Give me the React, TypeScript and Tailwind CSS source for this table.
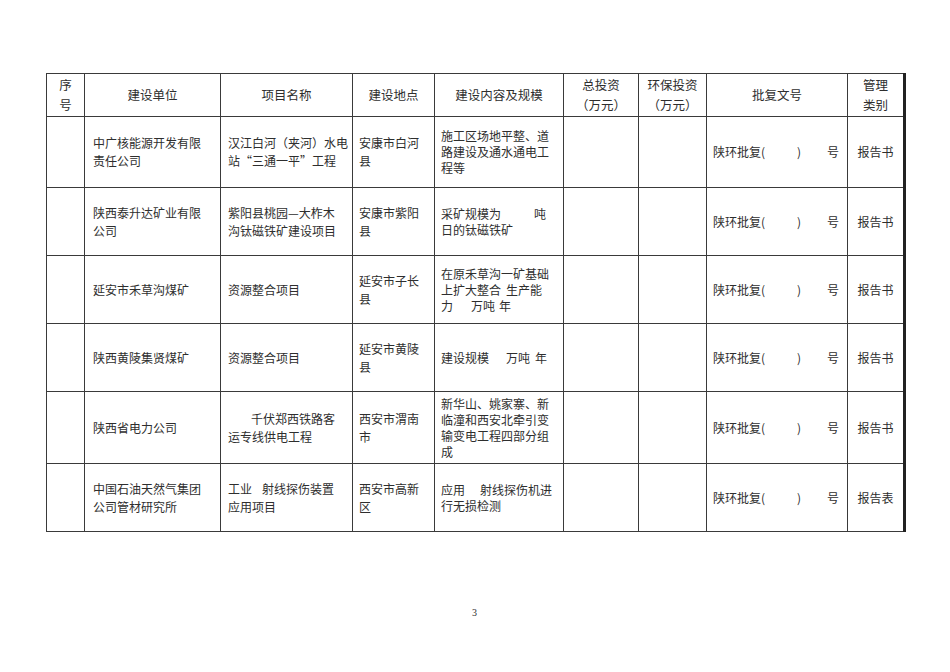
import React from "react";

const cell = "border border-[#3a3a3a] align-middle";

type Row = {
  unit: React.ReactNode;
  project: React.ReactNode;
  place: React.ReactNode;
  scope: React.ReactNode;
  kind: string;
  h: string;
};

const rows: Row[] = [
  {
    unit: <>中广核能源开发有限<br />责任公司</>,
    project: <>汉江白河（夹河）水电<br />站“三通一平”工程</>,
    place: <>安康市白河<br />县</>,
    scope: <>施工区场地平整、道<br />路建设及通水通电工<br />程等</>,
    kind: "报告书",
    h: "h-[71px]",
  },
  {
    unit: <>陕西泰升达矿业有限<br />公司</>,
    project: <>紫阳县桃园—大柞木<br />沟钛磁铁矿建设项目</>,
    place: <>安康市紫阳<br />县</>,
    scope: (
      <>
        采矿规模为<span className="ml-[33px]">吨</span>
        <br />日的钛磁铁矿
      </>
    ),
    kind: "报告书",
    h: "h-[68px]",
  },
  {
    unit: <>延安市禾草沟煤矿</>,
    project: <>资源整合项目</>,
    place: <>延安市子长<br />县</>,
    scope: (
      <>
        在原禾草沟一矿基础
        <br />上扩大整合<span className="ml-[5px]">生产能</span>
        <br />力<span className="ml-[18px]">万吨</span>
        <span className="ml-[4px]">年</span>
      </>
    ),
    kind: "报告书",
    h: "h-[68px]",
  },
  {
    unit: <>陕西黄陵集贤煤矿</>,
    project: <>资源整合项目</>,
    place: <>延安市黄陵<br />县</>,
    scope: (
      <>
        建设规模<span className="ml-[17px]">万吨</span>
        <span className="ml-[5px]">年</span>
      </>
    ),
    kind: "报告书",
    h: "h-[68px]",
  },
  {
    unit: <>陕西省电力公司</>,
    project: (
      <>
        <span className="ml-[23px]">千伏郑西铁路客</span>
        <br />运专线供电工程
      </>
    ),
    place: <>西安市渭南<br />市</>,
    scope: <>新华山、姚家寨、新<br />临潼和西安北牵引变<br />输变电工程四部分组<br />成</>,
    kind: "报告书",
    h: "h-[72px]",
  },
  {
    unit: <>中国石油天然气集团<br />公司管材研究所</>,
    project: (
      <>
        工业<span className="ml-[10px]">射线探伤装置</span>
        <br />应用项目
      </>
    ),
    place: <>西安市高新<br />区</>,
    scope: (
      <>
        应用<span className="ml-[15px]">射线探伤机进</span>
        <br />行无损检测
      </>
    ),
    kind: "报告表",
    h: "h-[68px]",
  },
];

function Approval() {
  return (
    <div className="flex items-center px-[6px] whitespace-nowrap">
      <span>陕环批复(</span>
      <span className="ml-[32px]">)</span>
      <span className="ml-auto pr-[2px]">号</span>
    </div>
  );
}

export default function App() {
  return (
    <div
      className="w-[950px] h-[672px] bg-white text-[#2e2e2e] text-[12px]"
      style={{ fontFamily: '"Noto Sans CJK SC", "Noto Sans", sans-serif' }}
    >
      <div className="pt-[73px] pl-[46px]">
        <table className="table-fixed border-collapse border-r-[3px] border-[#222]">
          <colgroup>
            <col className="w-[38px]" />
            <col className="w-[136px]" />
            <col className="w-[132px]" />
            <col className="w-[82px]" />
            <col className="w-[129px]" />
            <col className="w-[75px]" />
            <col className="w-[68px]" />
            <col className="w-[141px]" />
            <col className="w-[57px]" />
          </colgroup>
          <thead>
            <tr className="h-[43px] text-center leading-[20px] text-[12.5px]">
              <th className={`${cell} font-normal`}>序<br />号</th>
              <th className={`${cell} font-normal`}>建设单位</th>
              <th className={`${cell} font-normal`}>项目名称</th>
              <th className={`${cell} font-normal`}>建设地点</th>
              <th className={`${cell} font-normal`}>建设内容及规模</th>
              <th className={`${cell} font-normal`}>总投资<br />（万元）</th>
              <th className={`${cell} font-normal`}>环保投资<br />（万元）</th>
              <th className={`${cell} font-normal`}>批复文号</th>
              <th className={`${cell} font-normal border-r-[3px] border-r-[#222]`}>管理<br />类别</th>
            </tr>
          </thead>
          <tbody>
            {rows.map((r, i) => (
              <tr key={i} className={r.h}>
                <td className={cell}></td>
                <td className={`${cell} pl-[8px] leading-[18px] whitespace-nowrap`}>{r.unit}</td>
                <td className={`${cell} pl-[7px] leading-[18px] whitespace-nowrap`}>{r.project}</td>
                <td className={`${cell} pl-[6px] leading-[18px] whitespace-nowrap`}>{r.place}</td>
                <td className={`${cell} pl-[6px] leading-[16px] whitespace-nowrap`}>{r.scope}</td>
                <td className={cell}></td>
                <td className={cell}></td>
                <td className={cell}>
                  <Approval />
                </td>
                <td className={`${cell} text-center border-r-[3px] border-r-[#222]`}>{r.kind}</td>
              </tr>
            ))}
          </tbody>
        </table>
      </div>
      <div
        className="mt-[73px] text-center text-[10px] pr-[1px]"
        style={{ fontFamily: '"Liberation Serif", serif' }}
      >
        3
      </div>
    </div>
  );
}
